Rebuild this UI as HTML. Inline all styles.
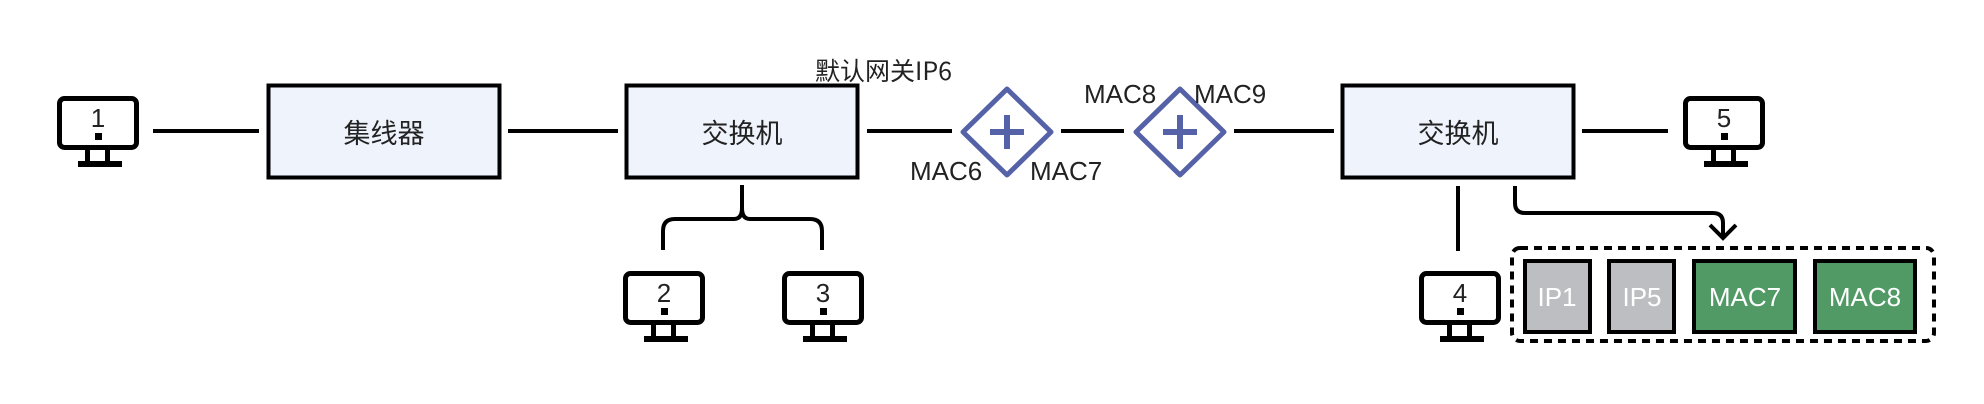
<!DOCTYPE html>
<html><head><meta charset="utf-8"><style>
html,body{margin:0;padding:0;background:#fff;}
svg{display:block}
text{font-family:"Liberation Sans","Noto Sans CJK SC",sans-serif;fill:#222;}
.cj{font-family:"Noto Sans CJK SC","Liberation Sans",sans-serif;}
</style></head><body>
<svg width="1984" height="404" viewBox="0 0 1984 404" xmlns="http://www.w3.org/2000/svg">
<defs>
<g id="mon">
<rect x="2.5" y="2.5" width="77" height="49" rx="5" fill="#fff" stroke="#000" stroke-width="5"/>
<rect x="38" y="37" width="7" height="7" fill="#000"/>
<rect x="28" y="54" width="5" height="13" fill="#000"/>
<rect x="48" y="54" width="5" height="13" fill="#000"/>
<rect x="21" y="65" width="44" height="6" fill="#000"/>
</g>
<g id="rt">
<path d="M0,-43 L44,0 L0,43 L-44,0 Z" fill="#fff" stroke="#5562a8" stroke-width="5" stroke-linejoin="round"/>
<path d="M-17,0 H17 M0,-17 V17" stroke="#5562a8" stroke-width="6"/>
</g>
</defs>
<g stroke="#000" stroke-width="4" fill="none">
<path d="M153,131 H259 M508,131 H618 M867,131 H952 M1061,131 H1124 M1234,131 H1334 M1582,131 H1668"/>
<path d="M742,185 V208 Q742,219 734,219 H675 Q663,219 663,231 V250 M742,208 Q742,219 750,219 H810 Q822,219 822,231 V250"/>
<path d="M1458,186 V251"/>
<path d="M1515,186 V203 Q1515,213 1525,213 H1713 Q1723,213 1723,223 V237"/>
<path d="M1710,225 L1723,238 L1736,225"/>
</g>
<rect x="268.5" y="85.5" width="231" height="92" fill="#eef3fc" stroke="#000" stroke-width="4"/>
<rect x="626.5" y="85.5" width="231" height="92" fill="#eef3fc" stroke="#000" stroke-width="4"/>
<rect x="1342.5" y="85.5" width="231" height="92" fill="#eef3fc" stroke="#000" stroke-width="4"/>
<text class="cj" x="384" y="143" font-size="27" text-anchor="middle">集线器</text>
<text class="cj" x="742" y="143" font-size="27" text-anchor="middle">交换机</text>
<text class="cj" x="1458" y="143" font-size="27" text-anchor="middle">交换机</text>
<text class="cj" x="815" y="80" font-size="25">默认网关IP6</text>
<use href="#rt" x="1007" y="132"/>
<use href="#rt" x="1180" y="132"/>
<text x="910" y="180" font-size="26">MAC6</text>
<text x="1030" y="180" font-size="26">MAC7</text>
<text x="1084" y="103" font-size="26">MAC8</text>
<text x="1194" y="103" font-size="26">MAC9</text>
<use href="#mon" x="57" y="96"/>
<use href="#mon" x="623" y="271"/>
<use href="#mon" x="782" y="271"/>
<use href="#mon" x="1419" y="271"/>
<use href="#mon" x="1683" y="96"/>
<g font-size="26" text-anchor="middle">
<text x="98" y="127">1</text>
<text x="664" y="302">2</text>
<text x="823" y="302">3</text>
<text x="1460" y="302">4</text>
<text x="1724" y="127">5</text>
</g>
<rect x="1512" y="248" width="422" height="93" rx="8" fill="none" stroke="#000" stroke-width="4" stroke-dasharray="8,6"/>
<rect x="1525" y="261" width="65" height="71" fill="#bcbec2" stroke="#000" stroke-width="4"/>
<rect x="1609" y="261" width="65" height="71" fill="#bcbec2" stroke="#000" stroke-width="4"/>
<rect x="1694" y="261" width="101" height="71" fill="#519a66" stroke="#000" stroke-width="4"/>
<rect x="1815" y="261" width="100" height="71" fill="#519a66" stroke="#000" stroke-width="4"/>
<g font-size="26" text-anchor="middle">
<text x="1557" y="306" style="fill:#fff">IP1</text>
<text x="1642" y="306" style="fill:#fff">IP5</text>
<text x="1745" y="306" style="fill:#fff">MAC7</text>
<text x="1865" y="306" style="fill:#fff">MAC8</text>
</g>
</svg>
</body></html>
